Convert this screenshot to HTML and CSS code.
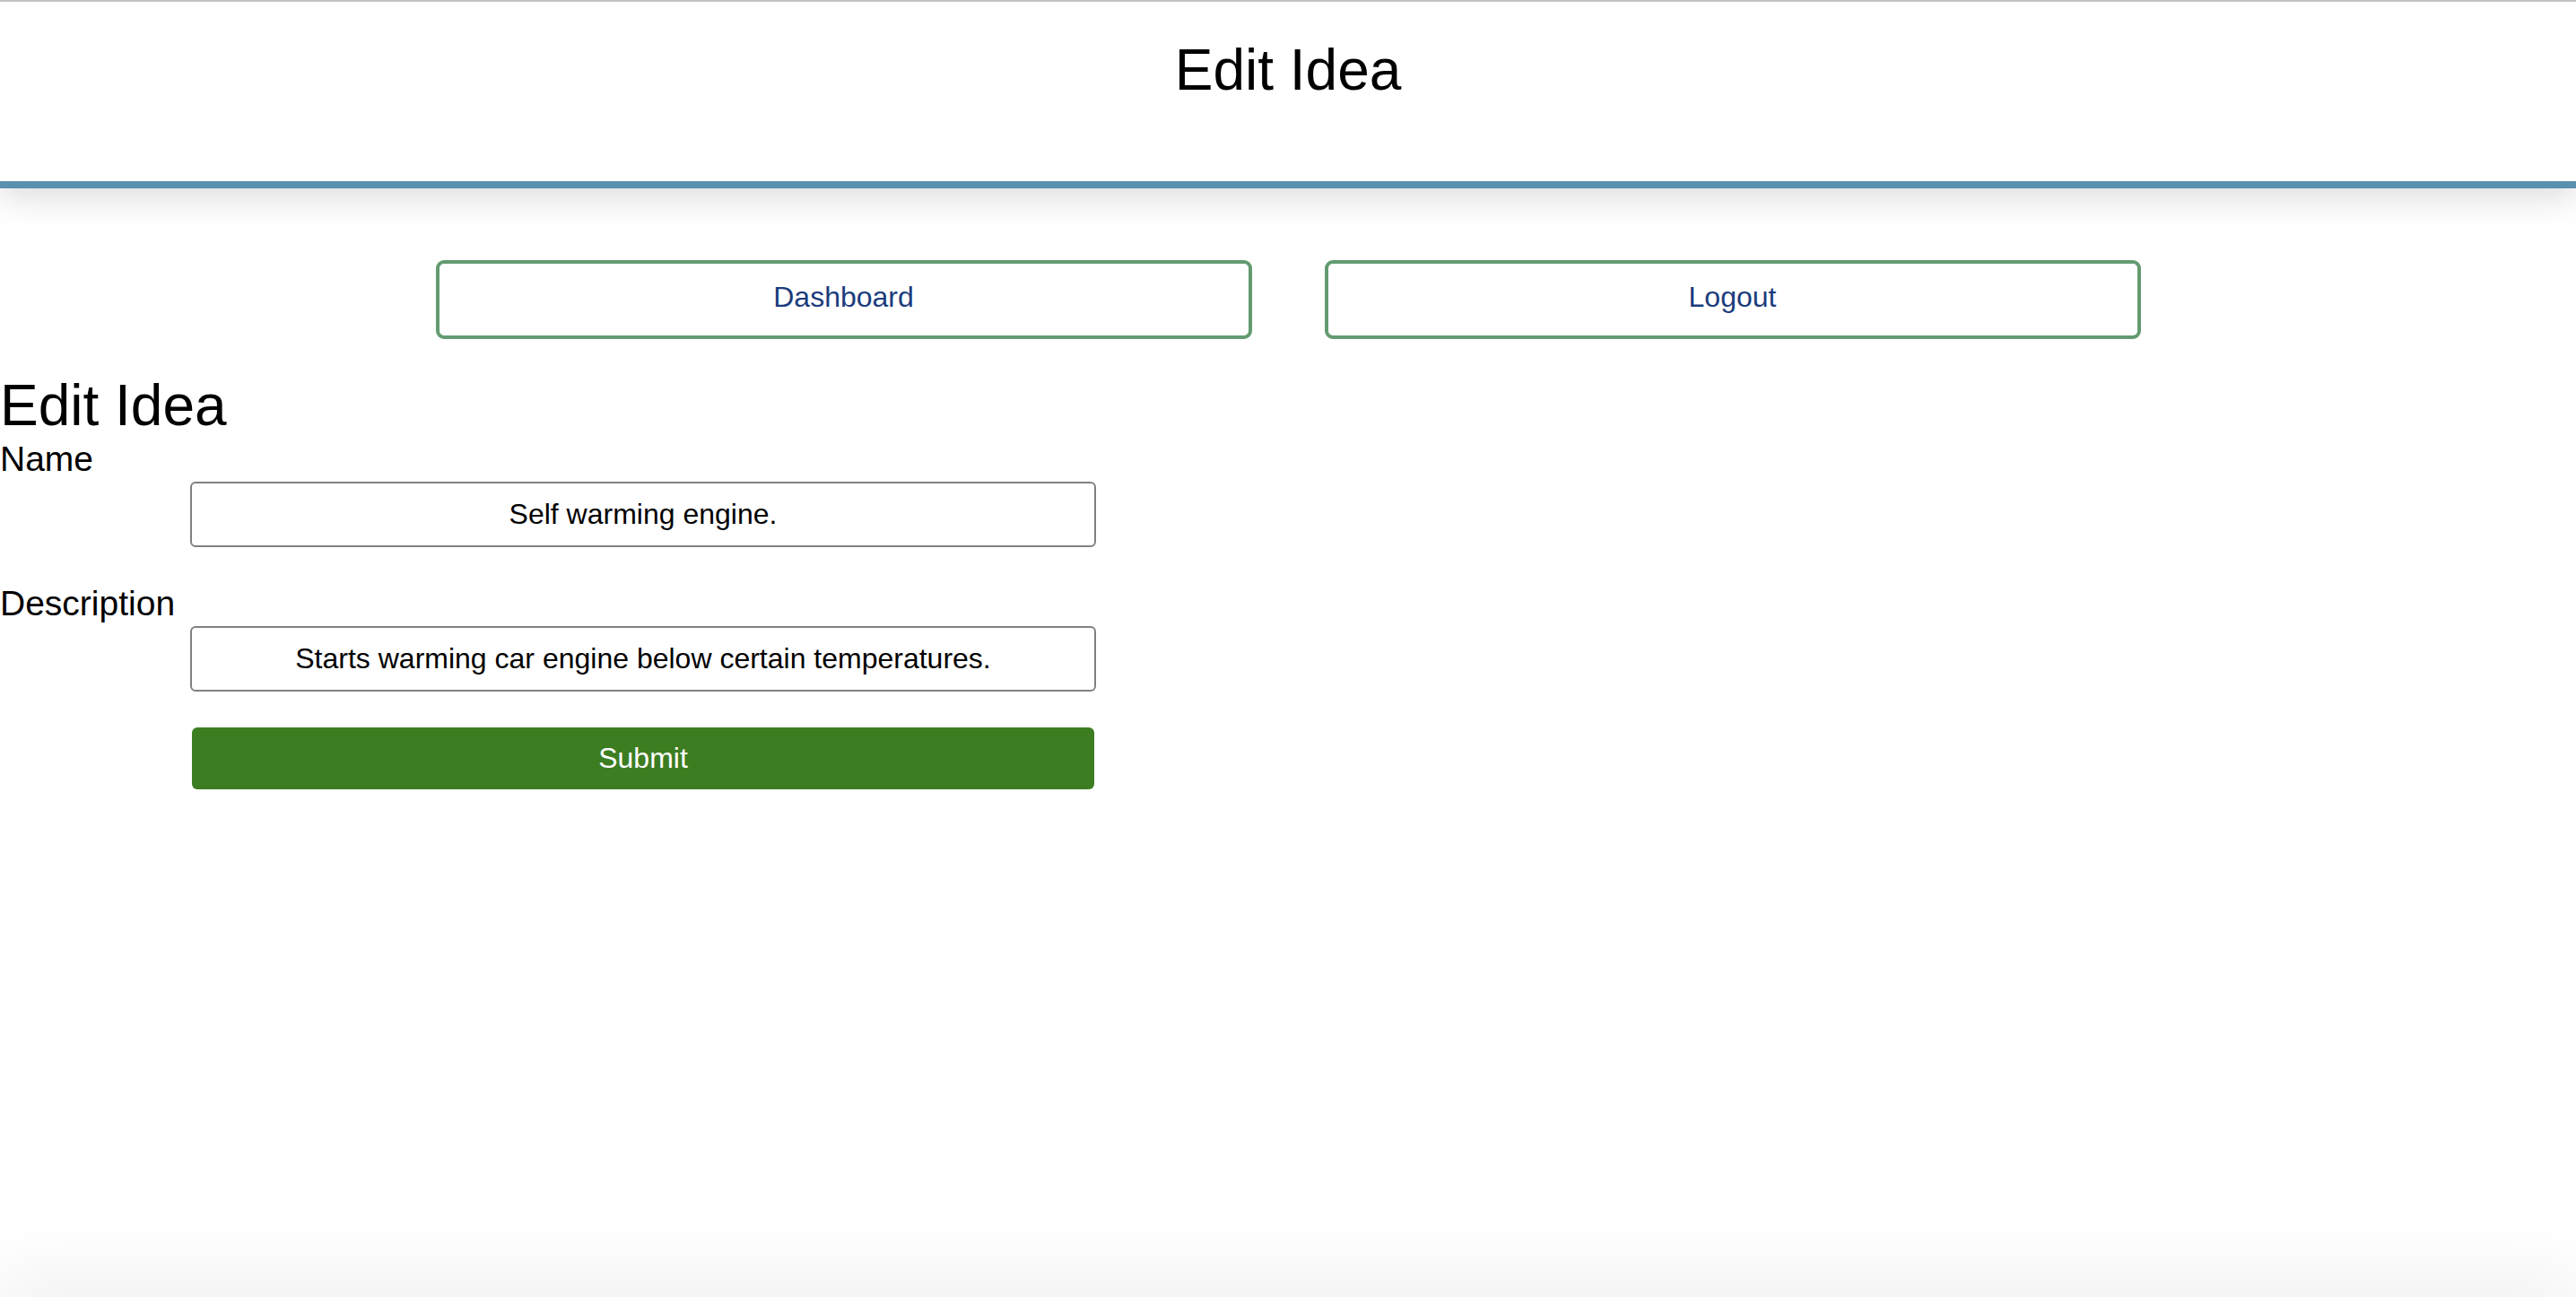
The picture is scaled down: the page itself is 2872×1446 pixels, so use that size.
FILE: index.html
```html
<!DOCTYPE html>
<html lang="en">
<head>
<meta charset="utf-8">
<title>Edit Idea</title>
<link rel="stylesheet" href="styles.css">
</head>
<body>
<header class="site-header">
  <h1 class="site-title">Edit Idea</h1>
</header>
<nav class="nav">
  <a class="nav-btn" href="#">Dashboard</a>
  <a class="nav-btn" href="#">Logout</a>
</nav>
<main class="content">
  <h2 class="page-title">Edit Idea</h2>
  <form class="idea-form">
    <label class="field-label" for="name">Name</label>
    <input class="field-input" id="name" type="text" value="Self warming engine.">
    <label class="field-label field-label--spaced" for="desc">Description</label>
    <input class="field-input" id="desc" type="text" value="Starts warming car engine below certain temperatures.">
    <button class="submit-btn" type="button">Submit</button>
  </form>
</main>
<div class="bottom-shade"></div>
</body>
</html>
```

FILE: styles.css
```css
html, body {
  margin: 0;
  padding: 0;
  background: #ffffff;
}
body {
  font-family: "Liberation Sans", Arial, sans-serif;
  color: #000;
  min-height: 1446px;
  overflow: hidden;
}
.site-header {
  box-sizing: border-box;
  height: 210px;
  border-top: 2px solid #c2c2c2;
  border-bottom: 8px solid #5a8fae;
  background: #fff;
  box-shadow: 0 10px 36px rgba(0, 0, 0, 0.14);
  text-align: center;
  position: relative;
  z-index: 1;
}
.site-title {
  margin: 39px 0 0;
  font-size: 64px;
  line-height: 74px;
  font-weight: 400;
}
.nav {
  display: flex;
  justify-content: center;
  gap: 81px;
  margin-top: 80px;
}
.nav-btn {
  box-sizing: border-box;
  width: 910px;
  height: 88px;
  padding-bottom: 5px;
  border: 4px solid #639b71;
  border-radius: 9px;
  display: flex;
  align-items: center;
  justify-content: center;
  color: #1b3c7c;
  font-size: 32px;
  text-decoration: none;
}
.content {
  margin-top: 37px;
}
.page-title {
  margin: 0;
  font-size: 64px;
  line-height: 74px;
  font-weight: 400;
}
.idea-form {
  display: flex;
  flex-direction: column;
  align-items: flex-start;
}
.field-label {
  font-size: 39px;
  line-height: 46px;
}
.field-label--spaced {
  margin-top: 40px;
}
.field-input {
  box-sizing: border-box;
  width: 1010px;
  height: 73px;
  margin: 2px 0 0 212px;
  border: 2px solid #808080;
  border-radius: 6px;
  padding: 0 10px;
  font-family: "Liberation Sans", Arial, sans-serif;
  font-size: 32px;
  color: #000;
  text-align: center;
  background: #fff;
}
.submit-btn {
  box-sizing: border-box;
  width: 1006px;
  height: 69px;
  margin: 40px 0 0 214px;
  border: none;
  border-radius: 6px;
  background: #3d7d22;
  color: #fff;
  font-family: "Liberation Sans", Arial, sans-serif;
  font-size: 32px;
}
.bottom-shade {
  position: fixed;
  left: 0;
  right: 0;
  top: 100%;
  height: 40px;
  box-shadow: 0 0 90px 10px rgba(0, 0, 0, 0.09);
}
```
